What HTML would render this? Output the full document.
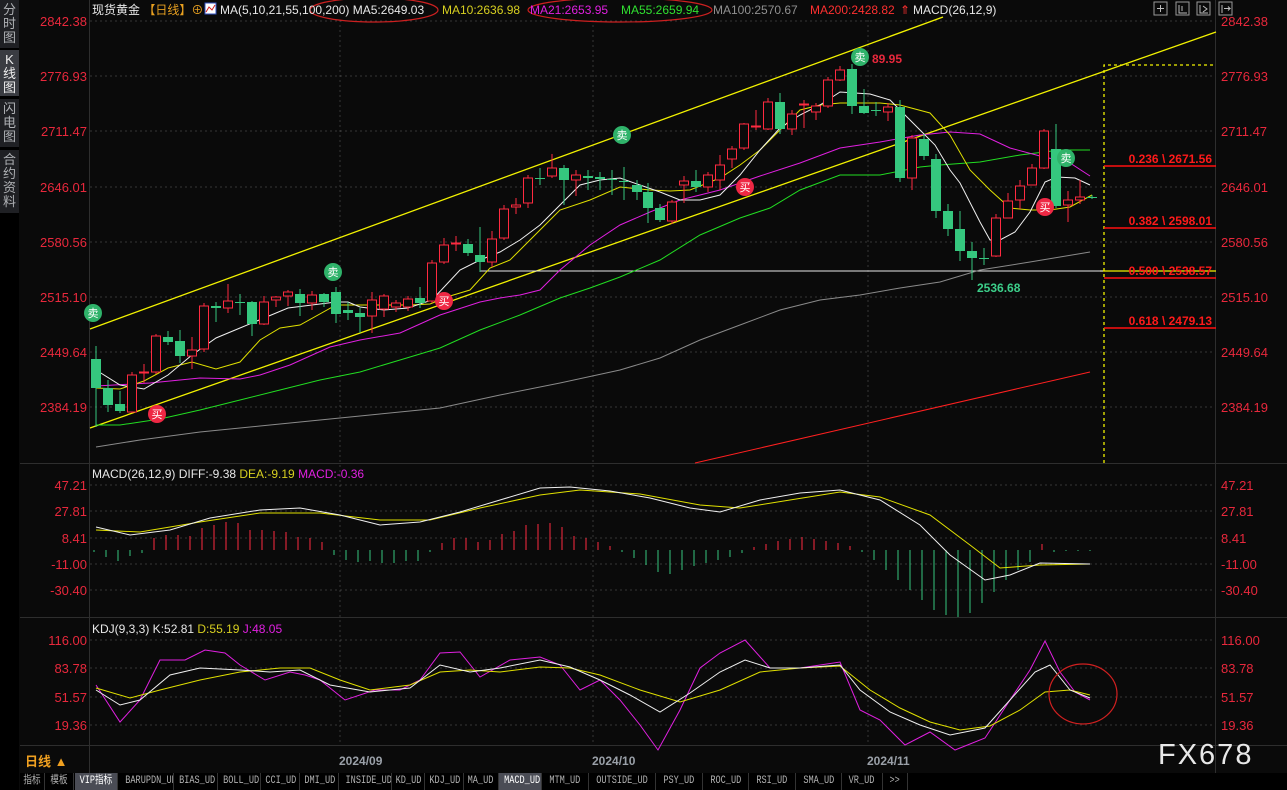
<!DOCTYPE html>
<html><head><meta charset="utf-8">
<style>
*{margin:0;padding:0;box-sizing:border-box}
body{width:1287px;height:790px;background:#0a0a0a;overflow:hidden;position:relative;font-family:"Liberation Sans","Noto Sans CJK SC",sans-serif}
#side{position:absolute;left:0;top:0;width:19px;height:790px;background:#000}
.sb{position:absolute;left:0;width:19px;background:#2a2c30;color:#aeb0b4;font-size:13px;line-height:14px;text-align:center;padding-top:3px}
#tabs{position:absolute;left:20px;top:773px;height:17px;width:1267px;background:#000;font-family:"Liberation Mono","Noto Sans CJK SC",monospace;font-size:11px;color:#b0b0b0}
.t{position:absolute;top:0;height:17px;line-height:17px;text-align:center;border-right:1px solid #333;white-space:nowrap;overflow:hidden}
.t span{display:inline-block;transform:scaleX(.78);transform-origin:center}
.hl{background:#4a4c55;color:#fff}
svg text{font-family:"Liberation Sans","Noto Sans CJK SC",sans-serif}
</style></head><body>
<div id="side">
<div class="sb" style="top:0;height:48px;background:#1f2024">分<br>时<br>图</div>
<div class="sb" style="top:50px;height:46px;background:#3a3c42;color:#eee">K<br>线<br>图</div>
<div class="sb" style="top:99px;height:48px;background:#1f2024">闪<br>电<br>图</div>
<div class="sb" style="top:150px;height:63px;background:#1f2024">合<br>约<br>资<br>料</div>
</div>
<svg id="s" width="1287" height="790" style="position:absolute;left:0;top:0" xmlns="http://www.w3.org/2000/svg">
<g stroke="#fff" stroke-opacity="0.18" stroke-dasharray="2,3">
<line x1="90" y1="21" x2="1215" y2="21"/><line x1="90" y1="76" x2="1215" y2="76"/><line x1="90" y1="131" x2="1215" y2="131"/><line x1="90" y1="187" x2="1215" y2="187"/><line x1="90" y1="242" x2="1215" y2="242"/><line x1="90" y1="297" x2="1215" y2="297"/><line x1="90" y1="352" x2="1215" y2="352"/><line x1="90" y1="407" x2="1215" y2="407"/>
<line x1="90" y1="485" x2="1215" y2="485"/><line x1="90" y1="511" x2="1215" y2="511"/><line x1="90" y1="538" x2="1215" y2="538"/><line x1="90" y1="564" x2="1215" y2="564"/><line x1="90" y1="590" x2="1215" y2="590"/>
<line x1="90" y1="640" x2="1215" y2="640"/><line x1="90" y1="668" x2="1215" y2="668"/><line x1="90" y1="697" x2="1215" y2="697"/><line x1="90" y1="725" x2="1215" y2="725"/>
<line x1="340" y1="20" x2="340" y2="745"/><line x1="593" y1="20" x2="593" y2="745"/><line x1="868" y1="20" x2="868" y2="745"/>
</g>
<g stroke="#2e2e2e"><line x1="89.5" y1="0" x2="89.5" y2="773"/><line x1="1215.5" y1="0" x2="1215.5" y2="773"/><line x1="20" y1="463.5" x2="1287" y2="463.5"/><line x1="20" y1="617.5" x2="1287" y2="617.5"/><line x1="20" y1="745.5" x2="1287" y2="745.5"/></g>
<g fill="#e8283c" font-size="13">
<g text-anchor="end">
<text x="87" y="26">2842.38</text><text x="87" y="81">2776.93</text><text x="87" y="136">2711.47</text><text x="87" y="192">2646.01</text><text x="87" y="247">2580.56</text><text x="87" y="302">2515.10</text><text x="87" y="357">2449.64</text><text x="87" y="412">2384.19</text>
<text x="87" y="490">47.21</text><text x="87" y="516">27.81</text><text x="87" y="543">8.41</text><text x="87" y="569">-11.00</text><text x="87" y="595">-30.40</text>
<text x="87" y="645">116.00</text><text x="87" y="673">83.78</text><text x="87" y="702">51.57</text><text x="87" y="730">19.36</text></g>
<text x="1221" y="26">2842.38</text><text x="1221" y="81">2776.93</text><text x="1221" y="136">2711.47</text><text x="1221" y="192">2646.01</text><text x="1221" y="247">2580.56</text><text x="1221" y="302">2515.10</text><text x="1221" y="357">2449.64</text><text x="1221" y="412">2384.19</text>
<text x="1221" y="490">47.21</text><text x="1221" y="516">27.81</text><text x="1221" y="543">8.41</text><text x="1221" y="569">-11.00</text><text x="1221" y="595">-30.40</text>
<text x="1221" y="645">116.00</text><text x="1221" y="673">83.78</text><text x="1221" y="702">51.57</text><text x="1221" y="730">19.36</text>
</g>
<g stroke="#f2f200" stroke-width="1.3" fill="none">
<line x1="90" y1="329" x2="943" y2="17"/>
<line x1="90" y1="428" x2="1216" y2="32"/>
<line x1="1100" y1="271" x2="1216" y2="271"/>
<polyline points="1104,463 1104,65 1216,65" stroke-dasharray="3,3"/>
</g>
<line x1="480" y1="271" x2="1103" y2="271" stroke="#e8e8e8"/>
<g stroke="#ff1010" stroke-width="1.5"><line x1="1104" y1="166" x2="1216" y2="166"/><line x1="1104" y1="228" x2="1216" y2="228"/><line x1="1104" y1="278" x2="1216" y2="278"/><line x1="1104" y1="328" x2="1216" y2="328"/></g>
<g fill="#ff1a1a" font-size="12" font-weight="bold" text-anchor="end"><text x="1212" y="163">0.236 \ 2671.56</text><text x="1212" y="225">0.382 \ 2598.01</text><text x="1212" y="275">0.500 \ 2538.57</text><text x="1212" y="325">0.618 \ 2479.13</text></g>
<g fill="none" stroke-width="1">
<polyline stroke="#ff2020" points="695,463 1090,372"/>
<polyline stroke="#8a8a8a" points="96,447 140,440 200,432 260,426 320,420 380,414 440,408 500,395 560,383 620,370 660,358 700,340 740,325 780,310 820,300 860,295 900,288 940,282 980,270 1030,262 1090,252"/>
<polyline stroke="#22dd22" points="96,425 120,425 160,419 200,410 240,400 280,390 320,380 360,372 400,360 440,348 480,330 520,315 560,298 590,288 620,277 660,260 700,235 740,218 770,208 800,190 840,175 880,175 920,167 940,165 980,162 1020,155 1060,150 1090,150"/>
<polyline stroke="#e020e0" points="96,386 150,383 200,378 240,379 260,375 290,365 330,347 360,340 400,333 440,315 480,302 500,298 520,295 540,290 560,270 590,245 620,225 650,212 680,200 720,190 760,176 800,163 840,148 880,142 920,135 950,132 980,134 1010,148 1040,156 1070,163 1090,176"/>
<polyline stroke="#e0e000" points="96,388 120,389 144,381 168,368 192,362 216,369 240,362 260,340 280,328 300,325 336,305 360,305 380,305 410,305 430,304 450,296 470,290 490,268 510,260 540,230 560,210 590,200 620,187 650,190 670,191 690,190 720,178 740,165 760,150 780,130 800,110 820,105 840,103 880,103 900,105 930,113 950,135 970,170 990,190 1010,208 1030,210 1050,210 1070,207 1092,195"/>
<polyline stroke="#f0f0f0" points="96,370 120,385 144,389 168,375 192,355 216,338 240,328 264,318 288,308 312,305 336,302 348,302 360,307 384,310 408,308 432,300 446,285 460,270 480,260 500,252 520,240 540,225 560,205 580,185 600,180 620,178 640,185 660,192 680,200 700,200 720,195 740,175 760,150 780,128 800,115 820,105 840,92 855,93 870,94 890,100 905,115 920,130 935,145 950,170 960,183 980,222 990,240 1000,240 1015,232 1030,212 1045,182 1057,177 1075,178 1090,185"/>
</g>
<g id="candles"></g>
<g id="hist"></g>
<g font-size="11" text-anchor="middle" fill="#fff">
<g fill="#2fb36a"><circle cx="93" cy="313" r="9"/><circle cx="333" cy="272" r="9"/><circle cx="622" cy="135" r="9"/><circle cx="860" cy="57" r="9"/><circle cx="1066" cy="158" r="9"/></g>
<g fill="#ee2844"><circle cx="157" cy="414" r="9"/><circle cx="444" cy="301" r="9"/><circle cx="745" cy="187" r="9"/><circle cx="1045" cy="207" r="9"/></g>
<text x="93" y="317">卖</text><text x="333" y="276">卖</text><text x="622" y="139">卖</text><text x="860" y="61">卖</text><text x="1066" y="162">卖</text>
<text x="157" y="418">买</text><text x="444" y="305">买</text><text x="745" y="191">买</text><text x="1045" y="211">买</text>
</g>
<text x="872" y="63" fill="#e8283c" font-size="12" font-weight="bold">89.95</text>
<text x="977" y="292" fill="#3ccf8a" font-size="12" font-weight="bold">2536.68</text>
<g fill="none">
<polyline stroke="#e0e000" points="96,530 140,532 200,522 260,513 320,513 380,520 430,520 480,508 540,495 580,490 640,494 700,505 740,508 790,500 840,492 880,497 930,515 970,545 1000,568 1040,565 1090,564"/>
<polyline stroke="#f0f0f0" points="96,527 130,535 170,530 210,518 260,510 300,508 340,515 380,525 420,522 460,512 500,500 540,488 570,487 610,491 650,498 690,508 720,512 760,500 800,493 840,490 880,500 920,525 950,555 985,580 1010,575 1040,563 1090,564"/>
<polyline stroke="#e020e0" points="96,685 120,722 140,700 160,660 185,660 205,650 225,653 240,665 265,680 290,672 305,675 320,680 345,700 375,690 400,690 420,680 440,653 460,652 480,677 510,660 540,657 560,665 580,690 600,680 620,700 640,725 658,750 680,710 700,668 720,653 745,640 770,668 800,668 840,662 860,710 880,720 905,745 930,732 955,750 985,738 1010,700 1030,670 1045,641 1060,672 1075,692 1090,700"/>
<polyline stroke="#e0e000" points="96,688 130,698 160,690 200,680 240,672 280,668 310,668 340,680 370,690 410,685 440,672 470,670 500,672 540,667 570,668 600,675 640,690 680,702 720,690 760,672 800,668 840,666 870,690 900,708 930,722 960,730 990,726 1020,710 1045,692 1070,690 1090,695"/>
<polyline stroke="#f0f0f0" points="96,690 120,705 140,700 170,675 200,668 240,670 270,672 300,670 330,685 370,692 410,688 440,665 470,672 500,668 540,660 570,667 600,680 630,695 660,712 690,693 720,672 745,660 770,668 800,668 840,665 860,690 890,712 920,725 950,735 985,728 1010,700 1035,672 1050,665 1070,690 1090,698"/>
</g>
<ellipse cx="1083" cy="694" rx="34" ry="30" fill="none" stroke="#d02020" stroke-width="1.2"/>
<g fill="none" stroke="#cc2020" stroke-width="1.2"><ellipse cx="374" cy="10" rx="64" ry="12"/><ellipse cx="620" cy="10" rx="92" ry="12"/></g>
<g font-size="12">
<text x="92" y="14" fill="#e8e8e8">现货黄金 <tspan fill="#e8a020">【日线】</tspan><tspan fill="#e8a020">⊕</tspan></text>
<rect x="205" y="3" width="11" height="11" fill="#fff" stroke="#3050c0"/><path d="M206 12 L209 7 L212 10 L215 5" stroke="#d02020" fill="none"/>
<text x="220" y="14" fill="#e8e8e8">MA(5,10,21,55,100,200) MA5:2649.03</text>
<text x="442" y="14" fill="#d8d020">MA10:2636.98</text>
<text x="530" y="14" fill="#e020e0">MA21:2653.95</text>
<text x="621" y="14" fill="#30e030">MA55:2659.94</text>
<text x="713" y="14" fill="#909090">MA100:2570.67</text>
<text x="810" y="14" fill="#ff3030">MA200:2428.82</text>
<text x="900" y="14" fill="#ff3030">⇑</text>
<text x="913" y="14" fill="#e8e8e8">MACD(26,12,9)</text>
<text x="92" y="478" fill="#e8e8e8">MACD(26,12,9) DIFF:-9.38 <tspan fill="#d8d020">DEA:-9.19</tspan> <tspan fill="#e020e0">MACD:-0.36</tspan></text>
<text x="92" y="633" fill="#e8e8e8">KDJ(9,3,3) K:52.81 <tspan fill="#d8d020">D:55.19</tspan> <tspan fill="#e020e0">J:48.05</tspan></text>
</g>
<g fill="none" stroke="#999"><rect x="1154" y="2" width="13" height="13"/><rect x="1176" y="2" width="13" height="13"/><rect x="1197" y="2" width="13" height="13"/><rect x="1219" y="2" width="13" height="13"/></g>
<g stroke="#bbb" fill="none"><path d="M1157 8.5h7M1160.5 5v7M1179 5v8h8M1182 6v5M1200 5v8h8M1203 6l4 3-4 3M1222 5v8M1224 8.5h6l-2-2M1228 10.5l2-2"/></g>
<text x="25" y="766" fill="#f0a020" font-size="13" font-weight="bold">日线 ▲</text>
<g fill="#9aa0a8" font-size="12" font-weight="bold"><text x="339" y="765">2024/09</text><text x="592" y="765">2024/10</text><text x="867" y="765">2024/11</text></g>
<text x="1158" y="764" fill="#e8e8e8" font-size="29" letter-spacing="2">FX678</text>
</svg>
<div id="tabs">
<div class="t" style="left:0;width:25px"><span>指标</span></div>
<div class="t" style="left:25px;width:29px"><span>模板</span></div>
<div class="t hl" style="left:55px;width:43px"><span>VIP指标</span></div>
<div class="t" style="left:98px;width:56px"><span>BARUPDN_UD</span></div>
<div class="t" style="left:154px;width:44px"><span>BIAS_UD</span></div>
<div class="t" style="left:198px;width:43px"><span>BOLL_UD</span></div>
<div class="t" style="left:241px;width:39px"><span>CCI_UD</span></div>
<div class="t" style="left:280px;width:39px"><span>DMI_UD</span></div>
<div class="t" style="left:319px;width:53px"><span>INSIDE_UD</span></div>
<div class="t" style="left:372px;width:33px"><span>KD_UD</span></div>
<div class="t" style="left:405px;width:39px"><span>KDJ_UD</span></div>
<div class="t" style="left:444px;width:35px"><span>MA_UD</span></div>
<div class="t hl" style="left:479px;width:43px"><span>MACD_UD</span></div>
<div class="t" style="left:522px;width:47px"><span>MTM_UD</span></div>
<div class="t" style="left:569px;width:67px"><span>OUTSIDE_UD</span></div>
<div class="t" style="left:636px;width:47px"><span>PSY_UD</span></div>
<div class="t" style="left:683px;width:46px"><span>ROC_UD</span></div>
<div class="t" style="left:729px;width:47px"><span>RSI_UD</span></div>
<div class="t" style="left:776px;width:46px"><span>SMA_UD</span></div>
<div class="t" style="left:822px;width:41px"><span>VR_UD</span></div>
<div class="t" style="left:863px;width:25px"><span>&gt;&gt;</span></div>
</div>
<script>
var C=[[96,359,388,346,427],[108,388,405,380,412],[120,404,411,391,413],[132,412,375,372,413],[144,373,372,364,383],[156,372,336,334,374],[168,337,342,331,345],[180,341,356,330,363],[192,356,350,337,369],[204,349,306,303,352],[216,306,308,302,322],[228,308,301,284,313],[240,302,303,294,315],[252,302,324,301,336],[264,324,302,296,325],[276,300,297,296,307],[288,296,292,290,306],[300,294,303,289,316],[312,303,295,291,310],[324,294,302,293,307],[336,292,314,287,323],[348,310,313,302,320],[360,313,317,308,333],[372,316,300,292,333],[384,309,296,294,317],[396,307,303,300,312],[408,307,299,296,311],[420,298,303,287,308],[432,301,263,260,303],[444,262,245,238,264],[456,244,243,236,251],[468,244,253,239,256],[480,255,262,227,272],[492,262,239,231,267],[504,238,209,205,240],[516,207,205,198,214],[528,203,178,175,208],[540,178,179,168,185],[552,176,168,154,178],[564,168,180,165,205],[576,180,175,170,196],[588,176,178,170,190],[600,177,179,172,190],[612,179,180,170,195],[624,181,182,167,200],[637,185,192,180,200],[648,192,208,183,223],[660,208,220,204,222],[672,221,202,200,224],[684,185,181,176,203],[696,181,187,170,192],[708,187,175,172,192],[720,180,165,155,190],[732,159,149,146,168],[744,148,124,123,150],[756,127,126,110,130],[768,129,102,98,130],[780,102,129,93,134],[792,129,114,110,135],[804,105,104,100,128],[816,112,106,103,120],[828,106,80,77,108],[840,80,70,66,81],[852,69,106,64,114],[864,106,113,89,114],[876,110,111,102,116],[888,112,107,103,121],[900,107,178,100,182],[912,178,138,135,190],[924,139,156,134,160],[936,159,211,154,218],[948,211,229,204,236],[960,229,251,211,261],[972,251,258,242,280],[984,258,259,248,265],[996,256,218,214,257],[1008,218,201,193,218],[1020,200,186,180,209],[1032,185,168,164,185],[1044,168,131,129,169],[1056,149,206,124,208],[1068,205,200,191,222],[1080,200,197,180,204],[1092,197,198,195,199]];
var H=[552,557,561,556,553,538,535,535,536,528,525,522,523,530,530,531,532,537,538,542,555,560,562,561,563,563,561,561,552,543,538,538,542,540,534,531,525,524,523,527,536,538,542,546,552,558,565,572,574,570,566,563,560,557,553,547,544,541,539,537,539,541,543,546,552,560,570,580,590,600,610,615,617,613,603,592,580,570,562,544,552,551,551,551];
var s='';
C.forEach(function(c){var x=c[0],o=c[1],cl=c[2],h=c[3],l=c[4];var up=cl<o;var col=up?'#ff2a40':'#35c77e';var t=Math.min(o,cl),b=Math.max(o,cl);if(b-t<1)b=t+1;
s+='<line x1="'+x+'" y1="'+h+'" x2="'+x+'" y2="'+l+'" stroke="'+col+'"/>';
s+=up?'<rect x="'+(x-4.5)+'" y="'+t+'" width="9" height="'+(b-t)+'" fill="#0a0a0a" stroke="'+col+'"/>':'<rect x="'+(x-5)+'" y="'+t+'" width="10" height="'+(b-t)+'" fill="'+col+'"/>';});
document.getElementById('candles').innerHTML=s;
var z=550,h2='';H.forEach(function(y,i){var x=94+i*12;h2+='<line x1="'+x+'" y1="'+z+'" x2="'+x+'" y2="'+y+'" stroke="'+(y<z?'#ff2a40':'#35c77e')+'"/>';});
document.getElementById('hist').innerHTML=h2;
</script>
</body></html>
